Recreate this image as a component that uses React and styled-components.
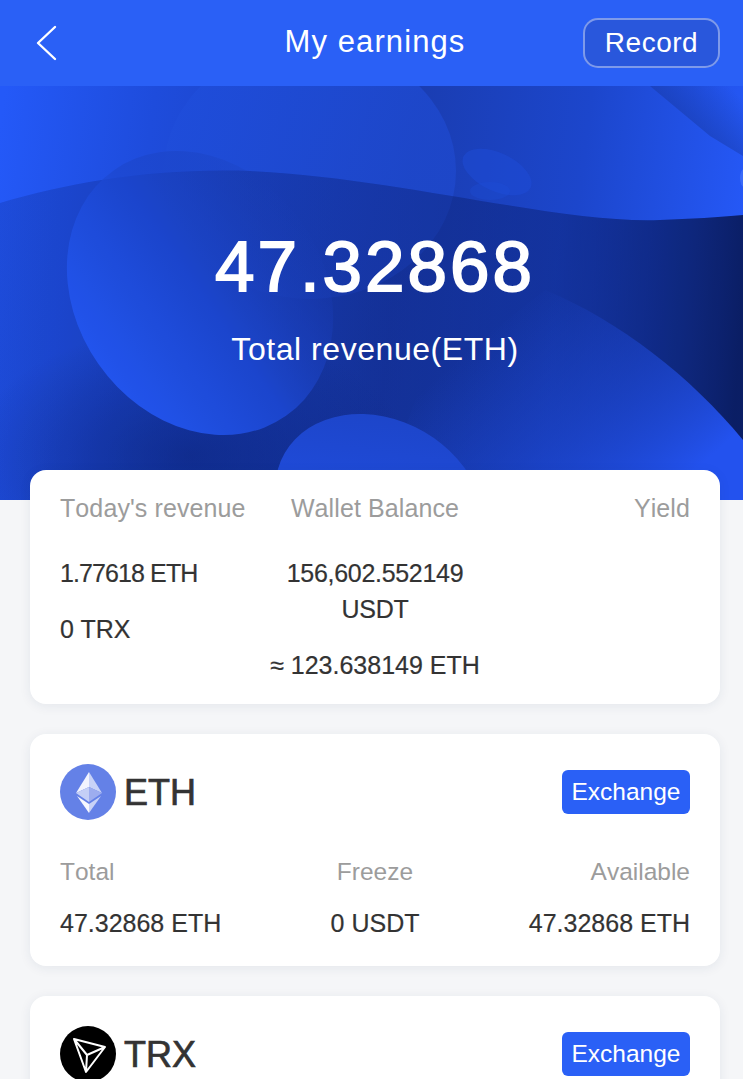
import React from 'react';
import styled, { createGlobalStyle } from 'styled-components';

const GlobalStyle = createGlobalStyle`
  html, body {
    margin: 0;
    padding: 0;
    background: #f5f6f8;
    font-family: "Liberation Sans", Arial, sans-serif;
  }
`;

const Page = styled.div`
  width: 743px;
  height: 1079px;
  overflow: hidden;
  background: #f5f6f8;
`;

const TopBar = styled.header`
  height: 86px;
  box-sizing: border-box;
  padding: 0 23px 0 30px;
  display: grid;
  grid-template-columns: 1fr auto 1fr;
  align-items: center;
  background: #2a60f6;
  color: #fff;
`;

const BackButton = styled.button`
  justify-self: start;
  margin-left: 6px;
  width: 22px;
  height: 36px;
  padding: 0;
  border: 0;
  background: none;
  display: flex;
`;

const Title = styled.h1`
  margin: 0 0 3px;
  font-size: 31px;
  font-weight: 400;
  letter-spacing: 1.1px;
`;

const RecordButton = styled.button`
  justify-self: end;
  width: 137px;
  height: 50px;
  box-sizing: border-box;
  border: 2px solid rgba(255, 255, 255, 0.4);
  border-radius: 15px;
  background: #2957dc;
  color: #fff;
  font: 400 28px "Liberation Sans", Arial, sans-serif;
  letter-spacing: 0.5px;
`;

const Hero = styled.section`
  position: relative;
  height: 414px;
  padding: 145px 0 0 7px;
  box-sizing: border-box;
  text-align: center;
  color: #fff;
  overflow: hidden;
`;

const HeroArt = styled.svg`
  position: absolute;
  inset: 0;
  width: 100%;
  height: 100%;
`;

const Amount = styled.div`
  position: relative;
  font-size: 71px;
  line-height: 72px;
  letter-spacing: 3px;
  -webkit-text-stroke: 1.8px #fff;
`;

const AmountLabel = styled.div`
  position: relative;
  margin-top: 26px;
  font-size: 32px;
  line-height: 40px;
  letter-spacing: 0.55px;
`;

const Content = styled.main`
  position: relative;
  margin-top: -30px;
  padding: 0 23px 0 30px;
  display: flex;
  flex-direction: column;
  gap: 30px;
`;

const Card = styled.article`
  border-radius: 16px;
  background: #fff;
  padding: 30px 30px 25px;
  box-shadow: 0 2px 12px rgba(30, 50, 90, 0.08);
`;

const SummaryCard = styled(Card)`
  padding: 18px 30px 1px;
`;

const ThreeColumns = styled.div`
  display: grid;
  grid-template-columns: repeat(3, 1fr);
`;

const Column = styled.div`
  text-align: ${(p) => p.$align || 'left'};
`;

const Label = styled.div`
  color: #9c9c9c;
  font-size: 25px;
  line-height: 40px;
  letter-spacing: 0.1px;
  font-kerning: none;
`;

const BalanceLabel = styled(Label)`
  font-size: 24.5px;
  letter-spacing: 0;
`;

const Value = styled.div`
  color: #333;
  font-size: 25px;
  line-height: 36px;
  margin-bottom: 20px;
  letter-spacing: ${(p) => p.$spacing || '0'};
  -webkit-text-stroke: 0.2px #333;
`;

const SummaryValues = styled(ThreeColumns)`
  margin-top: 27px;
`;

const CoinHeader = styled.div`
  display: flex;
  align-items: center;
  height: 56px;
  margin-bottom: 32px;
`;

const CoinName = styled.div`
  margin: 2px 0 0 8px;
  flex: 1;
  color: #333;
  font-size: 36px;
  -webkit-text-stroke: 0.7px #333;
`;

const ExchangeButton = styled.button`
  width: 128px;
  height: 44px;
  padding: 0;
  border: 0;
  border-radius: 6px;
  background: #2a60f6;
  color: #fff;
  font: 400 24.5px "Liberation Sans", Arial, sans-serif;
`;

const BalanceValue = styled(Value)`
  margin: 13px 0 0;
`;

const EthLogo = () => (
  <svg width="56" height="56" viewBox="0 0 56 56">
    <circle cx="28" cy="28" r="28" fill="#6481e7" />
    <path d="M29 8 L16 29 L29 23 Z" fill="#f2f4fe" />
    <path d="M29 8 L42 29 L29 23 Z" fill="#c8d2f7" />
    <path d="M29 23 L16 29 L29 38 Z" fill="#c4cff6" />
    <path d="M29 23 L42 29 L29 38 Z" fill="#9dadef" />
    <path d="M17 32 L29 40 L29 49 Z" fill="#f6f8fe" />
    <path d="M41 32 L29 40 L29 49 Z" fill="#c8d2f7" />
  </svg>
);

const TrxLogo = () => (
  <svg width="56" height="56" viewBox="0 0 56 56">
    <circle cx="28" cy="28" r="28" fill="#000" />
    <path
      d="M14 13 L45 21 L26 46 Z M14 13 L27 29 L45 21 M27 29 L26 46"
      fill="none"
      stroke="#fff"
      strokeWidth="2"
      strokeLinejoin="round"
    />
  </svg>
);

const wavePath = 'M0 117 C70 97 150 82 250 85 C400 92 560 138 660 134 C690 133 720 131 743 129 L743 414 L0 414 Z';

const HeroBackground = () => (
  <HeroArt viewBox="0 0 743 414" preserveAspectRatio="none">
    <defs>
      <linearGradient id="base" gradientUnits="userSpaceOnUse" x1="0" y1="40" x2="743" y2="130">
        <stop offset="0" stopColor="#2459f8" />
        <stop offset="0.2" stopColor="#1e4cdc" />
        <stop offset="0.55" stopColor="#1a3db2" />
        <stop offset="0.78" stopColor="#1c46cc" />
        <stop offset="1" stopColor="#2558f6" />
      </linearGradient>
      <linearGradient id="shade" gradientUnits="userSpaceOnUse" x1="0" y1="150" x2="743" y2="200">
        <stop offset="0" stopColor="#0a1e6c" stopOpacity="0.14" />
        <stop offset="0.45" stopColor="#0a1e6c" stopOpacity="0.3" />
        <stop offset="0.75" stopColor="#0a1e6c" stopOpacity="0.42" />
        <stop offset="1" stopColor="#081a58" stopOpacity="0.92" />
      </linearGradient>
      <radialGradient id="pool">
        <stop offset="0" stopColor="#0c2478" stopOpacity="0.6" />
        <stop offset="1" stopColor="#0c2478" stopOpacity="0" />
      </radialGradient>
      <linearGradient id="oval" x1="0" y1="0" x2="1" y2="0.5">
        <stop offset="0" stopColor="#1f4edd" />
        <stop offset="1" stopColor="#1e48cc" />
      </linearGradient>
      <linearGradient id="blob" x1="0" y1="0.5" x2="1" y2="0.5">
        <stop offset="0" stopColor="#2459f7" />
        <stop offset="0.5" stopColor="#1d49d4" />
        <stop offset="1" stopColor="#1a3fb8" stopOpacity="0.15" />
      </linearGradient>
      <linearGradient id="drop" x1="0" y1="0" x2="0.5" y2="1">
        <stop offset="0" stopColor="#1c43c4" />
        <stop offset="1" stopColor="#2252ec" />
      </linearGradient>
      <linearGradient id="lower" gradientUnits="userSpaceOnUse" x1="540" y1="200" x2="700" y2="380">
        <stop offset="0" stopColor="#1f4bdc" stopOpacity="0" />
        <stop offset="0.5" stopColor="#1f4bdc" stopOpacity="0.55" />
        <stop offset="1" stopColor="#2352ee" />
      </linearGradient>
      <linearGradient id="wedge" gradientUnits="userSpaceOnUse" x1="680" y1="28" x2="715" y2="-12">
        <stop offset="0" stopColor="#173aa8" stopOpacity="0.55" />
        <stop offset="1" stopColor="#173aa8" stopOpacity="0" />
      </linearGradient>
    </defs>
    <rect width="743" height="414" fill="url(#base)" />
    <path d="M650 0 L710 50 L743 70 L743 0 Z" fill="url(#wedge)" />
    <ellipse cx="744" cy="92" rx="4" ry="9" fill="#3a6af8" />
    <ellipse cx="310" cy="85" rx="146" ry="128" fill="url(#oval)" opacity="0.8" />
    <ellipse cx="497" cy="86" rx="37" ry="19" transform="rotate(25 497 86)" fill="#1f4edc" opacity="0.45" />
    <path d={wavePath} fill="url(#shade)" />
    <ellipse cx="190" cy="370" rx="220" ry="130" fill="url(#pool)" />
    <ellipse cx="200" cy="207" rx="124" ry="150" transform="rotate(-35 200 207)" fill="url(#blob)" />
    <path d={wavePath} fill="#0a1e6c" opacity="0.07" />
    <ellipse cx="490" cy="105" rx="20" ry="9" fill="#1f4edc" opacity="0.3" />
    <path d="M545 204 C620 235 690 290 743 354 L743 414 L380 414 L420 300 Z" fill="url(#lower)" />
    <ellipse cx="380" cy="422" rx="110" ry="88" transform="rotate(30 380 422)" fill="url(#drop)" />
  </HeroArt>
);

const App = () => (
  <Page>
    <GlobalStyle />
    <TopBar>
      <BackButton aria-label="Back">
        <svg width="22" height="36" viewBox="0 0 22 36">
          <path d="M19 2 L2 18 L19 34" fill="none" stroke="#fff" strokeWidth="2.4" strokeLinecap="round" strokeLinejoin="round" />
        </svg>
      </BackButton>
      <Title>My earnings</Title>
      <RecordButton>Record</RecordButton>
    </TopBar>
    <Hero>
      <HeroBackground />
      <Amount>47.32868</Amount>
      <AmountLabel>Total revenue(ETH)</AmountLabel>
    </Hero>
    <Content>
      <SummaryCard>
        <ThreeColumns>
          <Label>Today's revenue</Label>
          <Column $align="center"><Label>Wallet Balance</Label></Column>
          <Column $align="right"><Label>Yield</Label></Column>
        </ThreeColumns>
        <SummaryValues>
          <Column>
            <Value $spacing="-0.9px">1.77618 ETH</Value>
            <Value>0 TRX</Value>
          </Column>
          <Column $align="center">
            <Value $spacing="-0.3px">156,602.552149 USDT</Value>
            <Value>≈ 123.638149 ETH</Value>
          </Column>
          <Column />
        </SummaryValues>
      </SummaryCard>
      <Card>
        <CoinHeader>
          <EthLogo />
          <CoinName>ETH</CoinName>
          <ExchangeButton>Exchange</ExchangeButton>
        </CoinHeader>
        <ThreeColumns>
          <BalanceLabel>Total</BalanceLabel>
          <Column $align="center"><BalanceLabel>Freeze</BalanceLabel></Column>
          <Column $align="right"><BalanceLabel>Available</BalanceLabel></Column>
        </ThreeColumns>
        <ThreeColumns>
          <BalanceValue>47.32868 ETH</BalanceValue>
          <Column $align="center"><BalanceValue>0 USDT</BalanceValue></Column>
          <Column $align="right"><BalanceValue>47.32868 ETH</BalanceValue></Column>
        </ThreeColumns>
      </Card>
      <Card>
        <CoinHeader>
          <TrxLogo />
          <CoinName>TRX</CoinName>
          <ExchangeButton>Exchange</ExchangeButton>
        </CoinHeader>
      </Card>
    </Content>
  </Page>
);

export default App;
